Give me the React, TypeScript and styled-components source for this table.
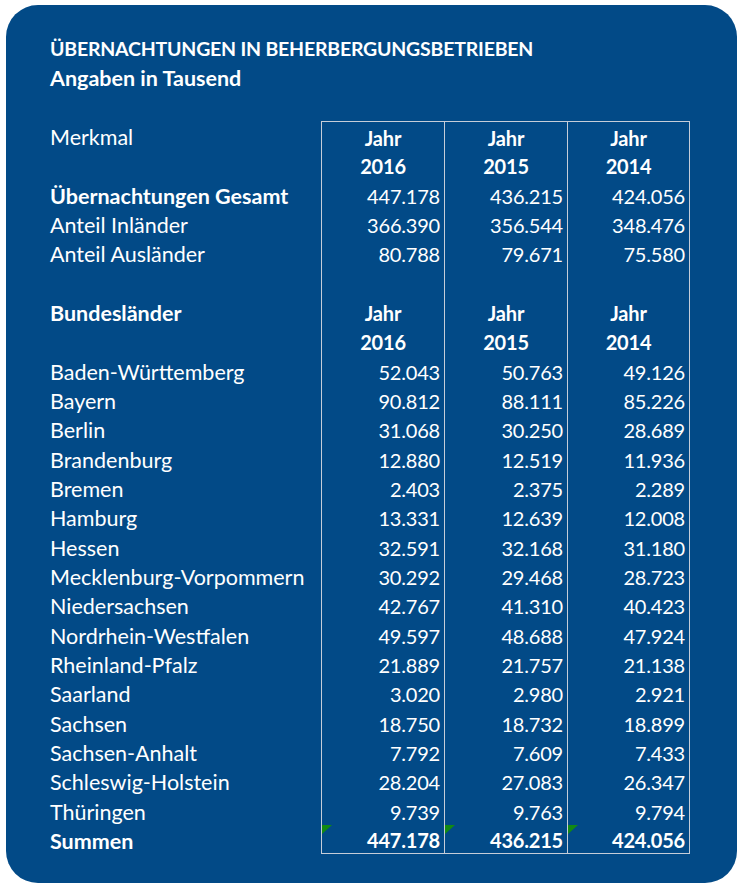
import React from "react";
import styled, { createGlobalStyle, css } from "styled-components";

const GlobalStyle = createGlobalStyle`
  html, body { margin: 0; padding: 0; background: #ffffff; }
  body { font-family: Lato, "Liberation Sans", sans-serif; }
`;

const ROW = 29.33;

const Page = styled.div`
  width: 742px;
  height: 888px;
  padding: 5px 0 0 6px;
  box-sizing: border-box;
`;

const Card = styled.div`
  width: 731px;
  height: 878px;
  box-sizing: border-box;
  background: #024a87;
  border-radius: 32px;
  padding: 28px 0 0 44px;
  color: #ffffff;
  font-size: 21.5px;
`;

const TitleLine = styled.div<{ $caps?: boolean }>`
  height: ${ROW}px;
  line-height: ${ROW + 3}px;
  font-weight: 700;
  white-space: nowrap;
  ${(p) => p.$caps && css`font-size: 19.5px; letter-spacing: -0.2px;`}
`;

const Spacer = styled.div`
  height: ${ROW}px;
`;

const Grid = styled.div`
  display: grid;
  grid-template-columns: 271px repeat(3, 123px);
  grid-auto-rows: ${ROW}px;
`;

const Label = styled.div<{ $bold?: boolean }>`
  line-height: ${ROW + 3}px;
  white-space: nowrap;
  font-weight: ${(p) => (p.$bold ? 700 : 400)};
`;

const Cell = styled.div<{
  $bold?: boolean;
  $center?: boolean;
  $last?: boolean;
  $top?: boolean;
  $bottom?: boolean;
}>`
  position: relative;
  line-height: ${ROW + 3}px;
  box-sizing: border-box;
  border-left: 1px solid #c6cdd8;
  padding-right: 4px;
  white-space: nowrap;
  font-size: 20px;
  letter-spacing: -0.2px;
  text-align: ${(p) => (p.$center ? "center" : "right")};
  font-weight: ${(p) => (p.$bold ? 700 : 400)};
  ${(p) => p.$center && css`padding: 0;`}
  ${(p) => p.$last && css`border-right: 1px solid #c6cdd8;`}
  ${(p) => p.$top && css`border-top: 1px solid #c6cdd8;`}
  ${(p) => p.$bottom && css`border-bottom: 1px solid #c6cdd8; line-height: ${ROW + 1}px;`}
`;

const Flag = styled.span`
  position: absolute;
  left: 0;
  top: 0;
  width: 0;
  height: 0;
  border-top: 9px solid #138a13;
  border-right: 10px solid transparent;
`;

type Row = {
  label: string;
  values: [string, string, string];
  labelBold?: boolean;
  valueBold?: boolean;
  center?: boolean;
  flag?: boolean;
};

const rows: Row[] = [
  { label: "Merkmal", values: ["Jahr", "Jahr", "Jahr"], valueBold: true, center: true },
  { label: "", values: ["2016", "2015", "2014"], valueBold: true, center: true },
  { label: "Übernachtungen Gesamt", values: ["447.178", "436.215", "424.056"], labelBold: true },
  { label: "Anteil Inländer", values: ["366.390", "356.544", "348.476"] },
  { label: "Anteil Ausländer", values: ["80.788", "79.671", "75.580"] },
  { label: "", values: ["", "", ""] },
  { label: "Bundesländer", values: ["Jahr", "Jahr", "Jahr"], labelBold: true, valueBold: true, center: true },
  { label: "", values: ["2016", "2015", "2014"], valueBold: true, center: true },
  { label: "Baden-Württemberg", values: ["52.043", "50.763", "49.126"] },
  { label: "Bayern", values: ["90.812", "88.111", "85.226"] },
  { label: "Berlin", values: ["31.068", "30.250", "28.689"] },
  { label: "Brandenburg", values: ["12.880", "12.519", "11.936"] },
  { label: "Bremen", values: ["2.403", "2.375", "2.289"] },
  { label: "Hamburg", values: ["13.331", "12.639", "12.008"] },
  { label: "Hessen", values: ["32.591", "32.168", "31.180"] },
  { label: "Mecklenburg-Vorpommern", values: ["30.292", "29.468", "28.723"] },
  { label: "Niedersachsen", values: ["42.767", "41.310", "40.423"] },
  { label: "Nordrhein-Westfalen", values: ["49.597", "48.688", "47.924"] },
  { label: "Rheinland-Pfalz", values: ["21.889", "21.757", "21.138"] },
  { label: "Saarland", values: ["3.020", "2.980", "2.921"] },
  { label: "Sachsen", values: ["18.750", "18.732", "18.899"] },
  { label: "Sachsen-Anhalt", values: ["7.792", "7.609", "7.433"] },
  { label: "Schleswig-Holstein", values: ["28.204", "27.083", "26.347"] },
  { label: "Thüringen", values: ["9.739", "9.763", "9.794"] },
  { label: "Summen", values: ["447.178", "436.215", "424.056"], labelBold: true, valueBold: true, flag: true },
];

export default function App() {
  return (
    <>
      <GlobalStyle />
      <Page>
        <Card>
          <TitleLine $caps>ÜBERNACHTUNGEN IN BEHERBERGUNGSBETRIEBEN</TitleLine>
          <TitleLine>Angaben in Tausend</TitleLine>
          <Spacer />
          <Grid>
            {rows.map((r, i) => (
              <React.Fragment key={i}>
                <Label $bold={r.labelBold}>{r.label}</Label>
                {r.values.map((v, j) => (
                  <Cell
                    key={j}
                    $bold={r.valueBold}
                    $center={r.center}
                    $last={j === 2}
                    $top={i === 0}
                    $bottom={i === rows.length - 1}
                  >
                    {r.flag && <Flag />}
                    {v}
                  </Cell>
                ))}
              </React.Fragment>
            ))}
          </Grid>
        </Card>
      </Page>
    </>
  );
}
